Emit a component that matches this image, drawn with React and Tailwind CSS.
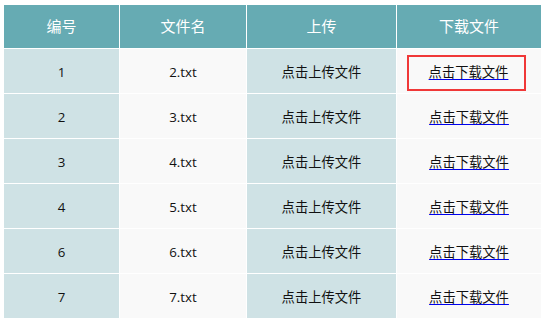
const rows = [
  { id: '1', name: '2.txt' },
  { id: '2', name: '3.txt' },
  { id: '3', name: '4.txt' },
  { id: '4', name: '5.txt' },
  { id: '6', name: '6.txt' },
  { id: '7', name: '7.txt' },
];

const font = { fontFamily: '"Segoe UI", "Open Sans", "Noto Sans CJK SC", sans-serif' };

export default function App() {
  return (
    <div className="min-h-screen bg-white pl-[4px] pt-[5px]" style={font}>
      <div className="grid grid-cols-[115px_126px_149px_144px] gap-px w-max">
        {['编号', '文件名', '上传', '下载文件'].map((h) => (
          <div
            key={h}
            className="h-[43px] bg-[#66abb3] text-white text-[15px] flex items-center justify-center"
          >
            {h}
          </div>
        ))}
        {rows.map((r, i) => (
          <Row key={i} row={r} first={i === 0} />
        ))}
      </div>
    </div>
  );
}

function Row({ row, first }) {
  const cell = 'h-[44px] pt-[3px] flex items-center justify-center text-[13.3px] text-[#111]';
  const link = 'text-[#111] underline decoration-[#0000ee] underline-offset-2';
  return (
    <>
      <div className={`${cell} bg-[#cfe2e5]`}>{row.id}</div>
      <div className={`${cell} bg-[#f9f9f9]`}>{row.name}</div>
      <div className={`${cell} bg-[#cfe2e5]`}>点击上传文件</div>
      <div className={`${cell} bg-[#f9f9f9]`}>
        {first ? (
          <div className="mt-[1px] mr-[6px] w-[119px] h-[36px] pl-[5px] border-2 border-[#f03838] flex items-center justify-center">
            <a href="#" className={link}>
              点击下载文件
            </a>
          </div>
        ) : (
          <a href="#" className={link}>
            点击下载文件
          </a>
        )}
      </div>
    </>
  );
}
